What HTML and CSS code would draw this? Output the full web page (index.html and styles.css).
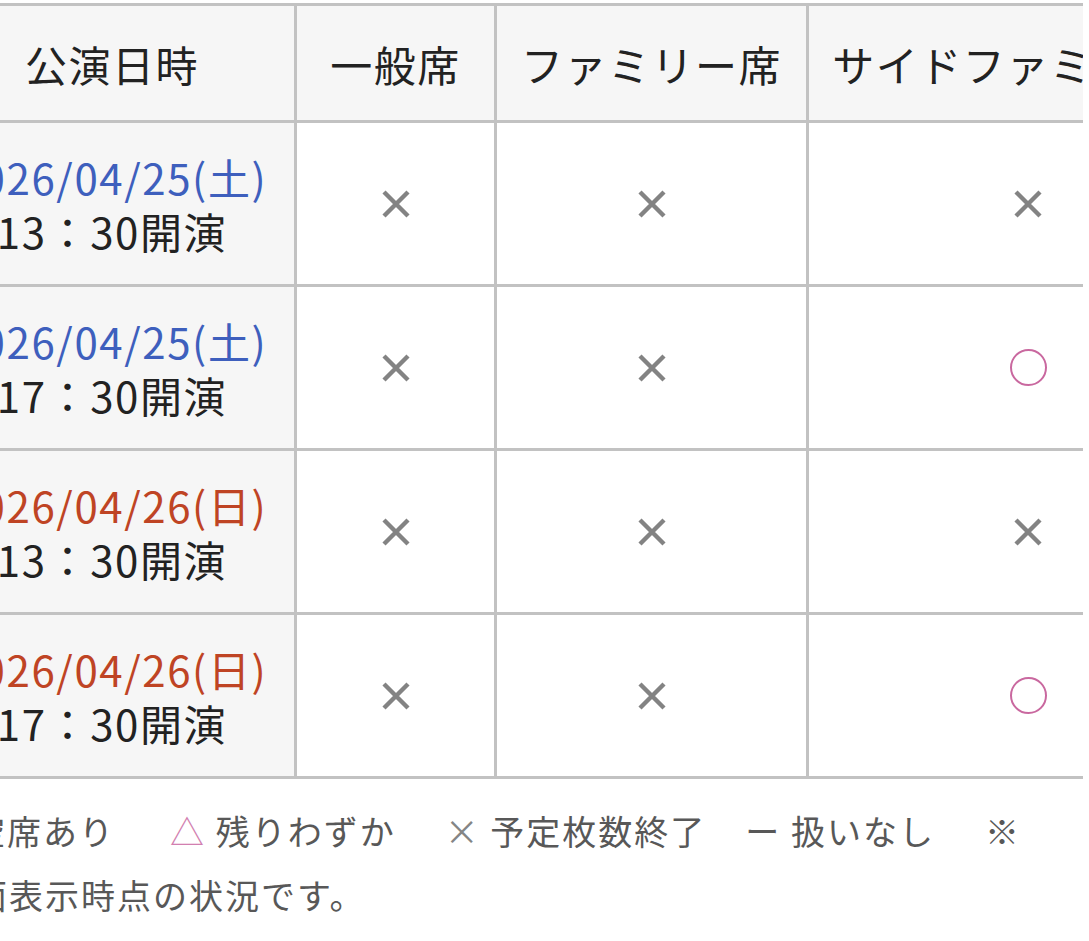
FILE: index.html
```html
<!DOCTYPE html>
<html lang="ja">
<head>
<meta charset="utf-8">
<title>公演日時</title>
<link rel="stylesheet" href="styles.css">
</head>
<body>
<div class="viewport">
  <table class="schedule">
    <colgroup>
      <col class="c-date">
      <col class="c-gen">
      <col class="c-fam">
      <col class="c-side">
    </colgroup>
    <thead>
      <tr>
        <th class="head-date">公演日時</th>
        <th>一般席</th>
        <th>ファミリー席</th>
        <th class="head-side">サイドファミリー席</th>
      </tr>
    </thead>
    <tbody>
      <tr>
        <th class="date"><span class="day sat">2026/04/25(土)</span><span class="time">13：30開演</span></th>
        <td><svg class="batsu" viewBox="0 0 28 28" aria-label="×"><path d="M2 2L26 26M26 2L2 26"/></svg></td>
        <td><svg class="batsu" viewBox="0 0 28 28" aria-label="×"><path d="M2 2L26 26M26 2L2 26"/></svg></td>
        <td><svg class="batsu" viewBox="0 0 28 28" aria-label="×"><path d="M2 2L26 26M26 2L2 26"/></svg></td>
      </tr>
      <tr>
        <th class="date"><span class="day sat">2026/04/25(土)</span><span class="time">17：30開演</span></th>
        <td><svg class="batsu" viewBox="0 0 28 28" aria-label="×"><path d="M2 2L26 26M26 2L2 26"/></svg></td>
        <td><svg class="batsu" viewBox="0 0 28 28" aria-label="×"><path d="M2 2L26 26M26 2L2 26"/></svg></td>
        <td><span class="maru" aria-label="○"></span></td>
      </tr>
      <tr>
        <th class="date"><span class="day sun">2026/04/26(日)</span><span class="time">13：30開演</span></th>
        <td><svg class="batsu" viewBox="0 0 28 28" aria-label="×"><path d="M2 2L26 26M26 2L2 26"/></svg></td>
        <td><svg class="batsu" viewBox="0 0 28 28" aria-label="×"><path d="M2 2L26 26M26 2L2 26"/></svg></td>
        <td><svg class="batsu" viewBox="0 0 28 28" aria-label="×"><path d="M2 2L26 26M26 2L2 26"/></svg></td>
      </tr>
      <tr>
        <th class="date"><span class="day sun">2026/04/26(日)</span><span class="time">17：30開演</span></th>
        <td><svg class="batsu" viewBox="0 0 28 28" aria-label="×"><path d="M2 2L26 26M26 2L2 26"/></svg></td>
        <td><svg class="batsu" viewBox="0 0 28 28" aria-label="×"><path d="M2 2L26 26M26 2L2 26"/></svg></td>
        <td><span class="maru" aria-label="○"></span></td>
      </tr>
    </tbody>
  </table>
  <p class="legend"><span class="item item-vacant"><span class="sym pink">○</span> 空席あり</span><span class="item item-few"><span class="sym pink">△</span> 残りわずか</span><span class="item item-end"><span class="sym gray sym-x">×</span> 予定枚数終了</span><span class="item item-none"><span class="sym">ー</span> 扱いなし</span><span class="note">※画面表示時点の状況です。</span></p>
</div>
</body>
</html>
```

FILE: styles.css
```css
html, body {
  margin: 0;
  padding: 0;
  background: #ffffff;
}

body {
  font-family: "Noto Sans CJK JP", "Noto Sans", sans-serif;
  color: #222222;
}

.viewport {
  width: 1083px;
  height: 941px;
  overflow: hidden;
  padding-top: 3px;
  box-sizing: border-box;
}

.schedule {
  table-layout: fixed;
  border-collapse: separate;
  border-spacing: 0;
  width: 1323px;
  margin-left: -73px;
  border-top: 3px solid #c2c2c2;
}

.c-date { width: 370px; }
.c-gen { width: 200px; }
.c-fam { width: 312px; }
.c-side { width: 441px; }

.schedule th,
.schedule td {
  box-sizing: border-box;
  border-right: 3px solid #c2c2c2;
  border-bottom: 3px solid #c2c2c2;
  text-align: center;
  vertical-align: middle;
  padding: 0;
}

.schedule th:first-child,
.schedule td:first-child {
  border-left: 3px solid #c2c2c2;
}

.schedule thead th {
  height: 117px;
  background: #f6f6f6;
  font-weight: 400;
  font-size: 42px;
  letter-spacing: 1.5px;
  color: #222222;
  white-space: nowrap;
}

.schedule tbody th,
.schedule tbody td {
  height: 164px;
}

.schedule tbody th.date {
  background: #f6f6f6;
  font-weight: 400;
  font-size: 42px;
  letter-spacing: 1.6px;
  line-height: 54px;
}

.day,
.time {
  display: block;
  white-space: nowrap;
}

.sat { color: #3e5fbd; }
.sun { color: #bf4424; }
.time { color: #222222; }

.batsu {
  display: inline-block;
  width: 28px;
  height: 28px;
  vertical-align: middle;
  fill: none;
  stroke: #838383;
  stroke-width: 4.4;
}

.maru {
  display: inline-block;
  width: 33px;
  height: 33px;
  border: 2px solid #c9689f;
  border-radius: 50%;
  vertical-align: middle;
}

.legend {
  margin: 20px 0 0 -63px;
  width: 1103px;
  text-indent: -11.6px;
  font-size: 34px;
  letter-spacing: 2px;
  line-height: 64px;
  color: #585858;
}

.item-vacant { margin-right: 55px; }
.item-few { margin-right: 49px; }
.item-end { margin-right: 39px; }
.item-none { margin-right: 50px; }

.sym.pink { color: #d27fb0; }
.sym.gray { color: #858585; }
```
